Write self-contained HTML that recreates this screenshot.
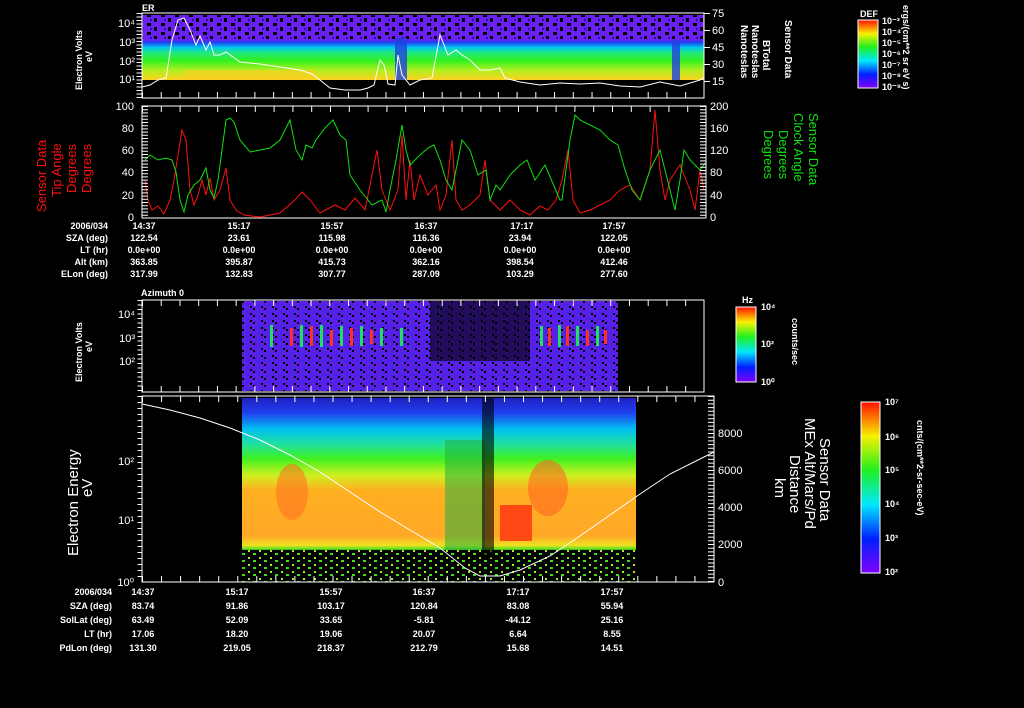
<!DOCTYPE html>
<html><head><meta charset="utf-8"><style>
html,body{margin:0;padding:0;background:#000;width:1024px;height:708px;overflow:hidden}
svg{display:block}
text{font-family:"Liberation Sans",sans-serif;fill:#fff}
.s{font-size:9px;font-weight:bold}
.m{font-size:11px}
</style></head><body>
<svg width="1024" height="708" viewBox="0 0 1024 708" xmlns="http://www.w3.org/2000/svg">
<defs>
<linearGradient id="g1" x1="0" y1="0" x2="0" y2="1">
<stop offset="0" stop-color="#7a1ff0"/><stop offset="0.38" stop-color="#6a20f0"/><stop offset="0.42" stop-color="#2040f0"/><stop offset="0.5" stop-color="#00c8f0"/><stop offset="0.58" stop-color="#20e880"/><stop offset="0.7" stop-color="#30f020"/><stop offset="0.85" stop-color="#b0f020"/><stop offset="1" stop-color="#ffd020"/>
</linearGradient>
<linearGradient id="g4" x1="0" y1="0" x2="0" y2="1">
<stop offset="0" stop-color="#2020c0"/><stop offset="0.08" stop-color="#2040f0"/><stop offset="0.17" stop-color="#00c0f0"/><stop offset="0.25" stop-color="#20e0a0"/><stop offset="0.33" stop-color="#40f020"/><stop offset="0.42" stop-color="#d0f020"/><stop offset="0.5" stop-color="#ffb020"/><stop offset="0.75" stop-color="#ffa828"/><stop offset="0.8" stop-color="#f0e020"/><stop offset="0.82" stop-color="#60e020"/><stop offset="0.84" stop-color="#103010"/><stop offset="1" stop-color="#204010"/>
</linearGradient>
<linearGradient id="cb" x1="0" y1="1" x2="0" y2="0">
<stop offset="0" stop-color="#8000ff"/><stop offset="0.2" stop-color="#0020ff"/><stop offset="0.4" stop-color="#00e8ff"/><stop offset="0.6" stop-color="#20f020"/><stop offset="0.8" stop-color="#f8f000"/><stop offset="1" stop-color="#ff1000"/>
</linearGradient>
<pattern id="spk" width="14" height="9" patternUnits="userSpaceOnUse">
<rect width="14" height="9" fill="#6a20f0"/><rect x="0" y="0" width="3" height="4" fill="#000"/><rect x="7" y="5" width="4" height="3" fill="#000"/><rect x="10" y="1" width="2" height="2" fill="#3010a0"/>
</pattern>
<pattern id="spk3" width="11" height="7" patternUnits="userSpaceOnUse">
<rect width="11" height="7" fill="#5a20e8"/><rect x="0" y="0" width="2" height="2" fill="#000"/><rect x="5" y="3" width="2" height="2" fill="#2030f0"/><rect x="8" y="5" width="2" height="2" fill="#000"/>
</pattern>
<pattern id="gs" width="11" height="7" patternUnits="userSpaceOnUse">
<rect width="11" height="7" fill="#000"/><rect x="0" y="0" width="3" height="2" fill="#40e020"/><rect x="6" y="4" width="2" height="2" fill="#a0f020"/>
</pattern>
</defs>

<!-- Panel 1 -->
<text x="142" y="11" class="s">ER</text>
<rect x="142" y="15" width="562" height="65" fill="url(#g1)"/>
<rect x="142" y="15" width="562" height="24" fill="url(#spk)"/>
<rect x="185" y="70" width="130" height="9" fill="#f8d020" opacity="0.7"/>
<rect x="395" y="38" width="12" height="42" fill="#2040e0" opacity="0.8"/>
<rect x="672" y="40" width="8" height="40" fill="#2040e0" opacity="0.8"/>
<polyline fill="none" stroke="#fff" stroke-width="1" points="142,87 150,85 158,80 166,78 172,40 178,20 184,18 190,30 196,45 200,36 206,50 210,42 214,55 220,55 226,52 240,62 260,64 280,67 300,70 312,74 320,80 330,88 345,90 360,90 368,88 374,85 380,60 384,65 388,84 395,85 398,55 402,75 410,85 420,80 432,78 440,35 448,55 456,50 462,55 470,60 480,70 490,70 500,68 505,78 520,82 540,85 560,83 580,84 600,83 620,86 640,87 660,82 680,86 690,83 700,80 704,78"/>
<rect x="142" y="13" width="562" height="85" fill="none" stroke="#fff" stroke-width="1"/>
<line x1="142" y1="95" x2="704" y2="95" stroke="#fff" stroke-width="6" stroke-dasharray="1 17.73"/>
<line x1="139" y1="13" x2="139" y2="98" stroke="#fff" stroke-width="5" stroke-dasharray="1 2.5"/>
<line x1="707" y1="13" x2="707" y2="98" stroke="#fff" stroke-width="6" stroke-dasharray="1 16"/>
<g class="m" text-anchor="end"><text x="135" y="27">10⁴</text><text x="135" y="46">10³</text><text x="135" y="65">10²</text><text x="135" y="83">10¹</text></g>
<text class="s" transform="translate(82,90) rotate(-90)">Electron Volts</text>
<text class="s" transform="translate(92,62) rotate(-90)">eV</text>
<g class="m"><text x="712" y="17">75</text><text x="712" y="34">60</text><text x="712" y="51">45</text><text x="712" y="68">30</text><text x="712" y="85">15</text></g>
<g class="s">
<text transform="translate(785,20) rotate(90)" font-size="10">Sensor Data</text>
<text transform="translate(763,40) rotate(90)" font-size="10">BTotal</text>
<text transform="translate(752,25) rotate(90)" font-size="10">Nanoteslas</text>
<text transform="translate(741,25) rotate(90)" font-size="10">Nanoteslas</text>
</g>
<text x="860" y="17" class="s" font-size="8">DEF</text>
<rect x="858" y="20" width="20" height="68" fill="url(#cb)" stroke="#fff"/>
<g class="s" font-size="7"><text x="882" y="24">10⁻³</text><text x="882" y="35">10⁻⁴</text><text x="882" y="46">10⁻⁵</text><text x="882" y="57">10⁻⁶</text><text x="882" y="68">10⁻⁷</text><text x="882" y="79">10⁻⁸</text><text x="882" y="90">10⁻⁹</text></g>
<text class="s" font-size="8" transform="translate(903,5) rotate(90)">ergs/(cm**2 sr eV s)</text>

<!-- Panel 2 -->
<polyline fill="none" stroke="#ff1010" points="145,180 148,200 152,210 158,206 164,214 170,200 174,180 178,155 182,130 186,140 190,190 194,205 198,195 202,180 206,195 210,178 214,200 220,190 226,168 230,200 236,210 244,215 260,217 280,213 295,200 302,192 310,200 320,213 335,205 345,210 355,198 365,210 372,175 377,150 382,190 390,210 398,190 402,135 406,200 410,160 414,200 420,175 428,195 436,185 440,210 446,195 452,140 456,200 462,210 470,205 480,195 485,160 490,200 500,210 510,200 520,210 530,215 540,206 548,210 556,200 562,180 568,150 573,200 580,213 590,210 600,205 610,200 620,190 630,185 640,200 650,170 655,110 660,170 665,200 670,180 680,165 690,190 695,210 700,170 704,190"/>
<polyline fill="none" stroke="#10e010" points="145,160 150,155 158,160 166,158 172,160 176,172 180,200 184,212 188,195 194,185 200,180 206,168 210,190 214,198 218,180 222,150 226,120 230,118 234,122 240,140 250,152 260,150 270,148 280,140 290,120 296,150 302,160 306,145 312,148 316,140 325,128 333,120 340,135 346,140 350,175 360,190 372,205 382,200 386,212 390,190 396,160 402,125 406,150 410,165 420,155 428,148 434,145 440,160 446,180 452,190 462,140 470,150 478,175 486,170 490,200 496,185 500,190 510,175 520,165 527,160 535,180 545,165 560,200 562,200 570,140 575,115 580,120 590,125 600,130 610,140 618,145 625,170 632,190 640,200 650,170 660,150 670,190 675,210 680,180 684,150 690,160 700,170 706,162"/>
<rect x="142" y="106" width="564" height="112" fill="none" stroke="#fff"/>
<line x1="142" y1="109" x2="706" y2="109" stroke="#fff" stroke-width="6" stroke-dasharray="1 17.8"/>
<line x1="145" y1="106" x2="145" y2="218" stroke="#fff" stroke-width="6" stroke-dasharray="1 2.2"/>
<line x1="703" y1="106" x2="703" y2="218" stroke="#fff" stroke-width="6" stroke-dasharray="1 2.2"/>
<g class="m" text-anchor="end"><text x="134" y="110">100</text><text x="134" y="132">80</text><text x="134" y="154">60</text><text x="134" y="176">40</text><text x="134" y="199">20</text><text x="134" y="221">0</text></g>
<g class="m"><text x="710" y="110">200</text><text x="710" y="132">160</text><text x="710" y="154">120</text><text x="710" y="176">80</text><text x="710" y="199">40</text><text x="710" y="221">0</text></g>
<g font-size="13">
<text transform="translate(46,212) rotate(-90)" style="fill:#ff1010">Sensor Data</text>
<text transform="translate(61,197) rotate(-90)" style="fill:#ff1010">Tip Angle</text>
<text transform="translate(76,193) rotate(-90)" style="fill:#ff1010">Degrees</text>
<text transform="translate(91,193) rotate(-90)" style="fill:#ff1010">Degrees</text>
</g>
<g font-size="13">
<text transform="translate(809,113) rotate(90)" style="fill:#10e010">Sensor Data</text>
<text transform="translate(794,113) rotate(90)" style="fill:#10e010">Clock Angle</text>
<text transform="translate(779,130) rotate(90)" style="fill:#10e010">Degrees</text>
<text transform="translate(764,130) rotate(90)" style="fill:#10e010">Degrees</text>
</g>
<g class="s" text-anchor="end"><text x="108" y="229">2006/034</text><text x="108" y="241">SZA (deg)</text><text x="108" y="253">LT (hr)</text><text x="108" y="265">Alt (km)</text><text x="108" y="277">ELon (deg)</text></g>
<g class="s" text-anchor="middle">
<text x="144" y="229">14:37</text><text x="239" y="229">15:17</text><text x="332" y="229">15:57</text><text x="426" y="229">16:37</text><text x="522" y="229">17:17</text><text x="614" y="229">17:57</text>
<text x="144" y="241">122.54</text><text x="239" y="241">23.61</text><text x="332" y="241">115.98</text><text x="426" y="241">116.36</text><text x="520" y="241">23.94</text><text x="614" y="241">122.05</text>
<text x="144" y="253">0.0e+00</text><text x="239" y="253">0.0e+00</text><text x="332" y="253">0.0e+00</text><text x="426" y="253">0.0e+00</text><text x="520" y="253">0.0e+00</text><text x="614" y="253">0.0e+00</text>
<text x="144" y="265">363.85</text><text x="239" y="265">395.87</text><text x="332" y="265">415.73</text><text x="426" y="265">362.16</text><text x="520" y="265">398.54</text><text x="614" y="265">412.46</text>
<text x="144" y="277">317.99</text><text x="239" y="277">132.83</text><text x="332" y="277">307.77</text><text x="426" y="277">287.09</text><text x="520" y="277">103.29</text><text x="614" y="277">277.60</text>
</g>

<!-- Panel 3 -->
<text x="141" y="296" class="s" font-size="10">Azimuth 0</text>
<rect x="242" y="301" width="376" height="90" fill="url(#spk3)"/>
<rect x="430" y="301" width="100" height="60" fill="#000" opacity="0.6"/>
<g fill="#ff3020"><rect x="290" y="328" width="3" height="18"/><rect x="310" y="326" width="3" height="20"/><rect x="330" y="330" width="3" height="16"/><rect x="350" y="328" width="3" height="18"/><rect x="370" y="330" width="3" height="14"/><rect x="548" y="328" width="3" height="18"/><rect x="566" y="326" width="3" height="20"/><rect x="586" y="330" width="3" height="16"/><rect x="604" y="330" width="3" height="14"/></g>
<g fill="#20e060"><rect x="270" y="325" width="3" height="22"/><rect x="300" y="325" width="3" height="22"/><rect x="320" y="325" width="3" height="22"/><rect x="340" y="326" width="3" height="20"/><rect x="360" y="326" width="3" height="20"/><rect x="380" y="328" width="3" height="18"/><rect x="400" y="328" width="3" height="18"/><rect x="540" y="326" width="3" height="20"/><rect x="558" y="325" width="3" height="22"/><rect x="576" y="326" width="3" height="20"/><rect x="596" y="326" width="3" height="20"/></g>
<rect x="142" y="300" width="562" height="92" fill="none" stroke="#fff"/>
<line x1="142" y1="303" x2="704" y2="303" stroke="#fff" stroke-width="6" stroke-dasharray="1 17.73"/>
<line x1="142" y1="389" x2="704" y2="389" stroke="#fff" stroke-width="6" stroke-dasharray="1 17.73"/>
<line x1="139.5" y1="300" x2="139.5" y2="392" stroke="#fff" stroke-width="4" stroke-dasharray="1 3.5"/>
<g class="m" text-anchor="end"><text x="135" y="318">10⁴</text><text x="135" y="342">10³</text><text x="135" y="365">10²</text></g>
<text class="s" transform="translate(82,382) rotate(-90)">Electron Volts</text>
<text class="s" transform="translate(92,352) rotate(-90)">eV</text>
<text x="742" y="303" class="s" font-size="8">Hz</text>
<rect x="736" y="307" width="20" height="75" fill="url(#cb)" stroke="#fff"/>
<g class="s" font-size="7"><text x="761" y="310">10⁴</text><text x="761" y="347">10²</text><text x="761" y="385">10⁰</text></g>
<text class="s" font-size="8" transform="translate(792,318) rotate(90)">counts/sec</text>

<!-- Panel 4 -->
<rect x="242" y="398" width="394" height="184" fill="url(#g4)"/>
<rect x="242" y="550" width="394" height="32" fill="url(#gs)"/>
<ellipse cx="292" cy="492" rx="16" ry="28" fill="#ff7020" opacity="0.55"/>
<ellipse cx="548" cy="488" rx="20" ry="28" fill="#ff6020" opacity="0.55"/>
<rect x="445" y="440" width="40" height="110" fill="#20b040" opacity="0.55"/>
<rect x="482" y="398" width="12" height="160" fill="#000" opacity="0.6"/>
<rect x="500" y="505" width="32" height="36" fill="#ff3010" opacity="0.8"/>
<polyline fill="none" stroke="#fff" points="142,404 170,410 200,418 230,428 260,440 290,455 320,472 350,492 380,512 410,530 440,548 465,568 480,576 500,576 520,570 550,556 580,536 610,515 640,494 670,474 714,452"/>
<rect x="142" y="396" width="572" height="186" fill="none" stroke="#fff"/>
<line x1="142" y1="399" x2="714" y2="399" stroke="#fff" stroke-width="6" stroke-dasharray="1 18.05"/>
<line x1="142" y1="579" x2="714" y2="579" stroke="#fff" stroke-width="6" stroke-dasharray="1 18.05"/>
<line x1="711" y1="396" x2="711" y2="582" stroke="#fff" stroke-width="6" stroke-dasharray="1 2.7"/>
<line x1="139.5" y1="396" x2="139.5" y2="582" stroke="#fff" stroke-width="4" stroke-dasharray="1 5"/>
<g class="m" text-anchor="end"><text x="134" y="465">10²</text><text x="134" y="524">10¹</text><text x="134" y="586">10⁰</text></g>
<text transform="translate(78,556) rotate(-90)" font-size="15">Electron Energy</text>
<text transform="translate(92,497) rotate(-90)" font-size="15">eV</text>
<g class="m"><text x="718" y="437">8000</text><text x="718" y="474">6000</text><text x="718" y="511">4000</text><text x="718" y="548">2000</text><text x="718" y="586">0</text></g>
<g font-size="15">
<text transform="translate(820,438) rotate(90)">Sensor Data</text>
<text transform="translate(805,418) rotate(90)">MEx Alt/Mars/Pd</text>
<text transform="translate(790,455) rotate(90)">Distance</text>
<text transform="translate(775,478) rotate(90)">km</text>
</g>
<rect x="861" y="402" width="19" height="171" fill="url(#cb)" stroke="#fff"/>
<g class="s" font-size="7"><text x="885" y="405">10⁷</text><text x="885" y="440">10⁶</text><text x="885" y="473">10⁵</text><text x="885" y="507">10⁴</text><text x="885" y="541">10³</text><text x="885" y="575">10²</text></g>
<text class="s" font-size="8" transform="translate(917,420) rotate(90)">cnts/(cm**2-sr-sec-eV)</text>
<g class="s" text-anchor="end" font-size="10"><text x="112" y="595">2006/034</text><text x="112" y="609">SZA (deg)</text><text x="112" y="623">SolLat (deg)</text><text x="112" y="637">LT (hr)</text><text x="112" y="651">PdLon (deg)</text></g>
<g class="s" text-anchor="middle" font-size="10">
<text x="143" y="595">14:37</text><text x="237" y="595">15:17</text><text x="331" y="595">15:57</text><text x="424" y="595">16:37</text><text x="518" y="595">17:17</text><text x="612" y="595">17:57</text>
<text x="143" y="609">83.74</text><text x="237" y="609">91.86</text><text x="331" y="609">103.17</text><text x="424" y="609">120.84</text><text x="518" y="609">83.08</text><text x="612" y="609">55.94</text>
<text x="143" y="623">63.49</text><text x="237" y="623">52.09</text><text x="331" y="623">33.65</text><text x="424" y="623">-5.81</text><text x="518" y="623">-44.12</text><text x="612" y="623">25.16</text>
<text x="143" y="637">17.06</text><text x="237" y="637">18.20</text><text x="331" y="637">19.06</text><text x="424" y="637">20.07</text><text x="518" y="637">6.64</text><text x="612" y="637">8.55</text>
<text x="143" y="651">131.30</text><text x="237" y="651">219.05</text><text x="331" y="651">218.37</text><text x="424" y="651">212.79</text><text x="518" y="651">15.68</text><text x="612" y="651">14.51</text>
</g>
</svg>
</body></html>
